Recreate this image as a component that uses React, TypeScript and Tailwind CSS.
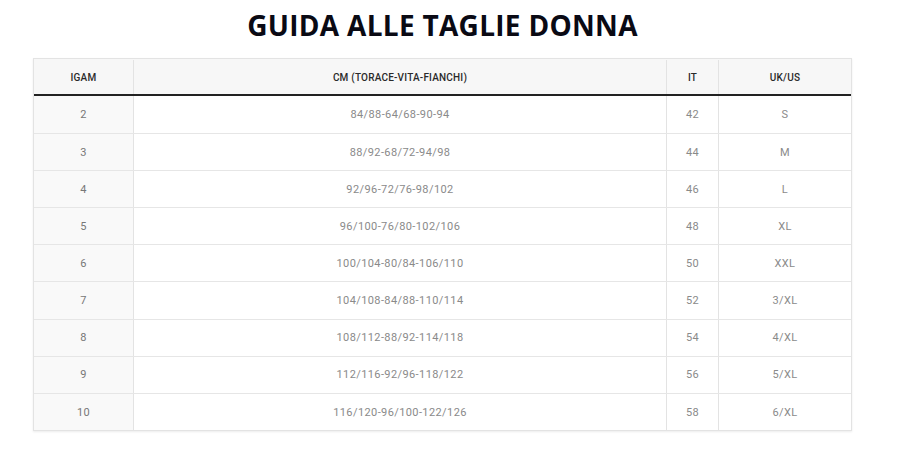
import React from "react";

const rows = [
  ["2", "84/88-64/68-90-94", "42", "S"],
  ["3", "88/92-68/72-94/98", "44", "M"],
  ["4", "92/96-72/76-98/102", "46", "L"],
  ["5", "96/100-76/80-102/106", "48", "XL"],
  ["6", "100/104-80/84-106/110", "50", "XXL"],
  ["7", "104/108-84/88-110/114", "52", "3/XL"],
  ["8", "108/112-88/92-114/118", "54", "4/XL"],
  ["9", "112/116-92/96-118/122", "56", "5/XL"],
  ["10", "116/120-96/100-122/126", "58", "6/XL"],
];

export default function App() {
  return (
    <div className="w-[898px] h-[455px] bg-white">
      <div className="ml-[33px] w-[819px] pt-[6px]">
        <h1
          className="h-[38px] text-center text-[28px] font-bold leading-[38px] tracking-[0.3px] text-[#0a0a14]"
          style={{ fontFamily: '"Open Sans", sans-serif' }}
        >
          GUIDA ALLE TAGLIE DONNA
        </h1>
        <div
          className="mt-[14px] border border-[#e3e3e3] shadow-[0_1px_2px_rgba(0,0,0,0.08)] text-[11px] tracking-[0.4px]"
          style={{ fontFamily: 'Roboto, "Liberation Sans", sans-serif' }}
        >
          <div className="flex h-[37px] bg-[#f7f7f7] border-b-2 border-[#222] text-[#2a2a2a] font-medium text-[10px] tracking-[0.2px] pt-[1px]">
            <div className="w-[100px] flex items-center justify-center border-r border-[#e3e3e3]">IGAM</div>
            <div className="w-[533px] flex items-center justify-center border-r border-[#e3e3e3]">CM (TORACE-VITA-FIANCHI)</div>
            <div className="w-[52px] flex items-center justify-center border-r border-[#e3e3e3]">IT</div>
            <div className="flex-1 flex items-center justify-center">UK/US</div>
          </div>
          {rows.map((r, i) => (
            <div
              key={i}
              className={`flex h-[37.1px] text-[#8a8a8a] ${i > 0 ? "border-t border-[#e6e6e6]" : ""}`}
            >
              <div className="w-[100px] flex items-center justify-center pt-[2px] bg-[#f9f9f9] border-r border-[#e3e3e3] text-[#777]">{r[0]}</div>
              <div className="w-[533px] flex items-center justify-center pt-[2px] border-r border-[#e3e3e3]">{r[1]}</div>
              <div className="w-[52px] flex items-center justify-center pt-[2px] border-r border-[#e3e3e3]">{r[2]}</div>
              <div className="flex-1 flex items-center justify-center pt-[2px]">{r[3]}</div>
            </div>
          ))}
        </div>
      </div>
    </div>
  );
}
